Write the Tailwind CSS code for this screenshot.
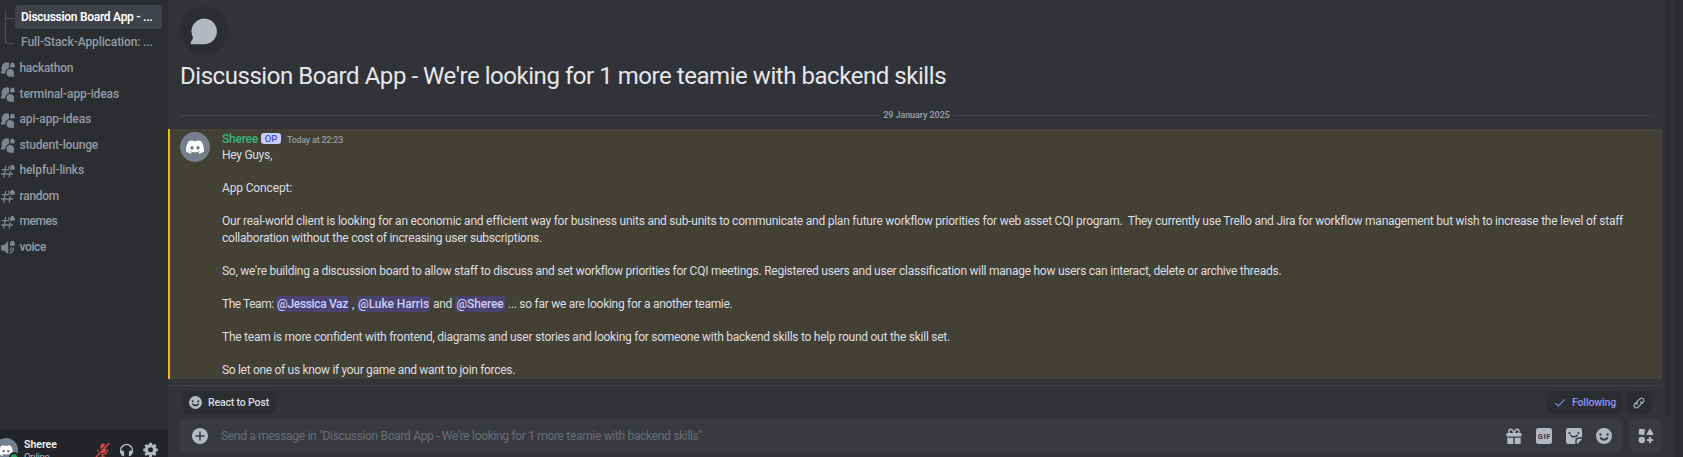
<!DOCTYPE html>
<html lang="en">
<head>
<meta charset="utf-8">
<title>Discussion Board App</title>
<script src="https://cdn.jsdelivr.net/npm/@tailwindcss/browser@4"></script>
</head>
<body class="h-[457px] w-[1683px] overflow-hidden bg-[#313338] font-['Roboto','Liberation_Sans',sans-serif] text-[12px] text-[#dbdee1]">
<svg class="hidden">
  <symbol id="clyde" viewBox="0 0 127.14 96.36"><path fill="currentColor" d="M107.7,8.07A105.15,105.15,0,0,0,81.47,0a72.06,72.06,0,0,0-3.36,6.83A97.68,97.68,0,0,0,49,6.83,72.37,72.37,0,0,0,45.64,0,105.89,105.89,0,0,0,19.39,8.09C2.79,32.65-1.71,56.6.54,80.21h0A105.73,105.73,0,0,0,32.71,96.36,77.7,77.7,0,0,0,39.6,85.25a68.42,68.42,0,0,1-10.85-5.18c.91-.66,1.8-1.34,2.66-2a75.57,75.57,0,0,0,64.32,0c.87.71,1.76,1.39,2.66,2a68.68,68.68,0,0,1-10.87,5.19,77,77,0,0,0,6.89,11.1A105.25,105.25,0,0,0,126.6,80.22h0C129.24,52.84,122.09,29.11,107.7,8.07ZM42.45,65.69C36.18,65.69,31,60,31,53s5-12.74,11.43-12.74S54,46,53.89,53,48.84,65.69,42.45,65.69Zm42.24,0C78.41,65.69,73.25,60,73.25,53s5-12.74,11.44-12.74S96.23,46,96.12,53,91.08,65.69,84.69,65.69Z"/></symbol>
  <symbol id="lock" viewBox="0 0 5 5"><path fill="currentColor" d="M.6 1.900V1.600a1.900 1.600 0 0 1 3.800 0v.3q.6.1.6.6v1.700q0 .8-.8.8H.8Q0 5 0 4.200V2.500q0-.5.6-.6Z"/></symbol>
  <symbol id="forum" viewBox="0 0 15 15"><path fill="currentColor" d="M8.300.4A5.600 5.600 0 0 0 1.800 7.500c.2.500.1 1-.2 1.400L.8 10.400c-.3.500 0 1 .5 1h3.400c.3 0 .5-.2.5-.5A5.500 5.500 0 0 1 8.500 6.200c.3-.1.5-.2.500-.5V.9c0-.3-.3-.5-.7-.5Z"/><path fill="currentColor" d="M10.300 7.100a3.800 3.800 0 1 0 0 7.600h3.600c.4 0 .6-.4.4-.7l-.5-.8c-.2-.2-.1-.5 0-.8a3.800 3.800 0 0 0-3.500-5.300Z"/><use href="#lock" x="9.900" y=".3" width="5" height="5.400"/></symbol>
  <symbol id="hash" viewBox="0 0 15 15"><path fill="none" stroke="currentColor" stroke-width="1.300" stroke-linecap="round" d="M5.600 2.500 3.800 13.200M10.200 7.500 9.200 13.200M8.900 2.500 8.700 4M2.200 5.700H8.800M1.500 10H12.500"/><use href="#lock" x="9.900" y=".6" width="5" height="5.400"/></symbol>
  <symbol id="voice" viewBox="0 0 15 15"><path fill="currentColor" d="M7.300 1.800c.4-.3.900 0 .9.500v10.800c0 .5-.5.8-.9.500L4 10.500H2a1 1 0 0 1-1-1V6a1 1 0 0 1 1-1h2Z"/><path fill="none" stroke="currentColor" stroke-width="1.300" stroke-linecap="round" d="M9.900 13.100a5.500 5.500 0 0 0 3.600-5M9.900 10.200a2.900 2.900 0 0 0 1.500-2.400"/><use href="#lock" x="9.900" y=".6" width="5" height="5.400"/></symbol>
  <symbol id="smile" viewBox="0 0 24 24"><path fill="currentColor" fill-rule="evenodd" d="M12 0a12 12 0 1 0 0 24 12 12 0 0 0 0-24ZM6.700 8a1.800 1.800 0 1 1 0 3.600 1.800 1.800 0 0 1 0-3.600Zm10.600 0a1.800 1.800 0 1 1 0 3.600 1.800 1.800 0 0 1 0-3.600ZM6 13.800q.9-.9 1.900.2 1.600 2.100 4.100 2.100t4.100-2.100q1-1.100 1.900-.2.800.7.200 1.800-2.100 3.400-6.200 3.400t-6.200-3.400q-.6-1.100.2-1.800Z"/></symbol>
</svg>
<div class="flex h-full w-full">
  <!-- Channel list -->
  <aside class="flex w-[168px] shrink-0 flex-col overflow-hidden bg-[#2b2d31] font-medium text-[#949ba4]">
    <div class="flex h-[55.500px] pt-[5px]">
      <svg class="h-[45px] w-[15px] shrink-0" viewBox="0 5 15 45" fill="none" stroke="#4e5058" stroke-width="1.200"><path d="M5.500 11V40.500q0 3 3 3H14M5.500 18.500H14"/></svg>
      <div class="w-[147px]">
        <div class="h-6 rounded-[3px] bg-[#404249] pl-[6px] leading-[25px] font-semibold tracking-[-0.279px] whitespace-nowrap text-white">Discussion Board App - ...</div>
        <div class="mt-[1px] h-6 pl-[6px] leading-[25px] tracking-[-0.095px] whitespace-nowrap">Full-Stack-Application: ...</div>
      </div>
    </div>
    <nav class="flex flex-col [&_svg]:size-[15px] [&_svg]:translate-y-[1px] [&_svg]:text-[#80848e] [&>div]:flex [&>div]:h-[25.500px] [&>div]:items-center [&>div]:gap-[4.500px]">
      <div><svg><use href="#forum"/></svg><span class="tracking-[-0.309px]">hackathon</span></div>
      <div><svg><use href="#forum"/></svg><span class="tracking-[-0.105px]">terminal-app-ideas</span></div>
      <div><svg><use href="#forum"/></svg><span class="tracking-[-0.137px]">api-app-ideas</span></div>
      <div><svg><use href="#forum"/></svg><span class="tracking-[-0.196px]">student-lounge</span></div>
      <div><svg><use href="#hash"/></svg><span class="tracking-[-0.129px]">helpful-links</span></div>
      <div><svg><use href="#hash"/></svg><span class="tracking-[-0.300px]">random</span></div>
      <div><svg><use href="#hash"/></svg><span class="tracking-[-0.450px]">memes</span></div>
      <div><svg><use href="#voice"/></svg><span class="tracking-[-0.385px]">voice</span></div>
    </nav>
    <div class="mt-auto flex h-[27px] items-start bg-[#232428] pt-2">
      <div class="relative -ml-[6px] flex size-6 shrink-0 items-center justify-center rounded-full bg-[#747f8d] text-white">
        <svg class="h-[11px] w-[14px]"><use href="#clyde"/></svg>
        <span class="absolute top-[14px] left-[15px] size-[10px] rounded-full border-2 border-[#232428] bg-[#23a55a]"></span>
      </div>
      <div class="ml-[6px] w-[71px] text-[10.500px] leading-[13px]">
        <div class="font-semibold text-[#f2f3f5]">Sheree</div>
        <div class="text-[9.750px] leading-[11px] font-normal tracking-[-0.350px] text-[#b5bac1]">Online</div>
      </div>
      <div class="flex gap-[9px] pt-1 text-[#b5bac1]">
        <svg class="size-[15px] text-[#da4a45]" viewBox="0 0 15 15" fill="none" stroke="currentColor"><path d="M1.500 14.500 14 1.500" stroke-width="1.500" stroke-linecap="round"/><path d="M5.500 8V4a2.500 2.500 0 0 1 4.800-1Z" fill="currentColor" stroke="none"/><path d="M10.500 7.200v.8a2.500 2.500 0 0 1-2.500 2.500l-.8-.1ZM2.800 7.500q.1 1.200.6 2.200M12.700 7.500A4.800 4.800 0 0 1 5.900 12.200M7.800 12.500V15M5.500 15H10" stroke-width="1.200"/></svg>
        <svg class="size-[15px]" viewBox="0 0 15 15"><path d="M2.800 12A5.900 5.900 0 1 1 12.200 12" fill="none" stroke="currentColor" stroke-width="1.500"/><path fill="currentColor" d="M1.300 8.500h1.800a2 2 0 0 1 2 2v3.700C3 14.500 1 12 1.300 8.500ZM13.700 8.500h-1.800a2 2 0 0 0-2 2v3.700c2.100.3 4.100-2.200 3.800-5.700Z"/></svg>
        <svg class="size-[15px]" viewBox="0 0 24 24"><path fill="currentColor" fill-rule="evenodd" d="M10 1h4l.6 3 1.700.7L18.900 3l2.800 2.800-1.700 2.600.6 1.600 3 .6v4l-3 .6-.7 1.600 1.700 2.600-2.800 2.800-2.600-1.700-1.600.7-.6 3h-4l-.6-3-1.700-.7-2.500 1.700L2.400 19.400l1.700-2.600-.7-1.600-3-.6v-4l3-.6.7-1.600-1.700-2.600L5.200 3l2.600 1.700L9.400 4ZM12 8.500a4 4 0 1 0 0 8 4 4 0 0 0 0-8Z"/></svg>
      </div>
    </div>
  </aside>

  <!-- Thread -->
  <main class="flex w-[1497px] shrink-0 flex-col">
    <div class="mt-[7px] ml-3 flex size-12 items-center justify-center rounded-full bg-[#2b2d31]">
      <svg class="size-[27px] -translate-x-px text-[#b5b8c1]" viewBox="0 0 27 27"><path fill="currentColor" d="M14 .5A12.700 12.700 0 0 0 2.700 18.700c.4.800.3 1.500-.2 2.200L.8 24.200c-.6 1 0 2.100 1.100 2.100H14A12.900 12.900 0 0 0 14 .5Z"/></svg>
    </div>
    <h1 class="mt-[6px] ml-3 h-[30px] text-[24px] leading-[30px] font-normal tracking-[-0.453px] whitespace-nowrap text-[#e6e7ea]">Discussion Board App - We're looking for 1 more teamie with backend skills</h1>
    <div class="mt-[18px] mr-3 ml-3 flex h-3 items-center gap-[3px] text-[9px] leading-3 font-semibold tracking-[-0.090px] text-[#949ba4]">
      <span class="h-px flex-1 bg-[#3f4147]"></span>29 January 2025<span class="h-px flex-1 bg-[#3f4147]"></span>
    </div>
    <article class="mt-2 flex h-[250px] w-[1494px] border-l-2 border-[#f0b82c] bg-[#434035] pl-[10px]">
      <div class="mt-[3px] flex size-[30px] shrink-0 items-center justify-center rounded-full bg-[#757e8a] text-white"><svg class="h-[14px] w-[18px]"><use href="#clyde"/></svg></div>
      <div class="ml-3 pt-[1.500px] leading-[16.500px] whitespace-nowrap">
        <div class="flex h-[16.500px] items-center"><span class="font-medium tracking-[-0.225px] text-[#3ab27f]">Sheree</span><span class="ml-[3px] flex h-[11px] w-5 items-center justify-center rounded-[3px] bg-[#c9cdfb] text-[9.500px] leading-[11px] font-medium text-[#4752c4]">OP</span><span class="mt-[2px] ml-[6px] text-[9px] font-medium tracking-[-0.243px] text-[#949ba4]">Today at 22:23</span></div>
        <p class="tracking-[-0.280px]">Hey Guys,</p>
        <p class="mt-[16.500px] tracking-[-0.148px]">App Concept:</p>
        <p class="mt-[16.500px] tracking-[-0.232px]">Our real-world client is looking for an economic and efficient way for business units and sub-units to communicate and plan future workflow priorities for web asset CQI program.&nbsp; They currently use Trello and Jira for workflow management but wish to increase the level of staff</p>
        <p class="tracking-[-0.241px]">collaboration without the cost of increasing user subscriptions.</p>
        <p class="mt-[16.500px] tracking-[-0.253px]">So, we're building a discussion board to allow staff to discuss and set workflow priorities for CQI meetings. Registered users and user classification will manage how users can interact, delete or archive threads.</p>
        <div class="mt-[16.500px] flex h-[16.500px] [&>b]:h-4 [&>b]:rounded-[2px] [&>b]:bg-[#4a4370] [&>b]:text-center [&>b]:font-medium [&>b]:text-[#c9cdfb]"><span class="w-[54px] tracking-[-0.450px]">The Team:</span><b class="w-[73px] tracking-[-0.350px]">@Jessica Vaz</b><span class="w-2 pl-[3px]">,</span><b class="w-[73px] tracking-[-0.081px]">@Luke Harris</b><span class="w-[25px] pl-[3px] tracking-[-0.300px]">and</span><b class="w-[50px] tracking-[-0.159px]">@Sheree</b><span class="pl-[3px] tracking-[-0.280px]">... so far we are looking for a another teamie.</span></div>
        <p class="mt-[16.500px] tracking-[-0.248px]">The team is more confident with frontend, diagrams and user stories and looking for someone with backend skills to help round out the skill set.</p>
        <p class="mt-[16.500px] tracking-[-0.311px]">So let one of us know if your game and want to join forces.</p>
      </div>
    </article>
    <div class="mt-[6px] flex w-[1494px] items-start border-t border-[#3f4147] pt-[5px] pr-[10px] pl-[14px] text-[10.500px] font-medium">
      <div class="flex h-[23px] w-[94px] items-center gap-[6px] rounded-[6px] bg-[#2b2d31] pl-[7px] tracking-[-0.147px] text-[#dbdee1]"><svg class="size-[13px] text-[#b5bac1]"><use href="#smile"/></svg>React to Post</div>
      <div class="ml-auto flex h-[23px] w-[76px] items-center gap-[7px] rounded-[6px] bg-[#2b2d31] pl-2 tracking-[-0.134px] text-[#8f93f2]"><svg class="h-[8px] w-[10px]" viewBox="0 0 10 8" fill="none" stroke="#7a80dd" stroke-width="1.200" stroke-linecap="round"><path d="M.6 4.300 3.400 7 9.400.8"/></svg>Following</div>
      <div class="ml-[3px] flex h-[23px] w-[26px] items-center justify-center rounded-[6px] bg-[#2b2d31] text-[#b5bac1]"><svg class="size-[12px]" viewBox="0 0 12 12" fill="none" stroke="currentColor" stroke-width="1.100" stroke-linecap="round"><path d="M4.300 7.400C3.500 6.200 3.800 5 4.600 4.200L7 1.800a2.250 2.250 0 0 1 3.200 3.200L8.700 6.500M7.700 4.600c.8 1.200.5 2.400-.3 3.200L5 10.200A2.250 2.250 0 0 1 1.800 7L3.300 5.500"/></svg></div>
    </div>
    <div class="mt-[5px] ml-3 flex h-[33px] w-[1482px] gap-[6px] text-[#b5b8c1]">
      <div class="flex flex-1 items-center rounded-[6px] bg-[#383a40] pr-[11px] pl-3">
        <svg class="size-4" viewBox="0 0 16 16"><circle cx="8" cy="8" r="8" fill="currentColor"/><path d="M8 4v8M4 8h8" stroke="#383a40" stroke-width="1.500" stroke-linecap="round"/></svg>
        <span class="ml-[13px] tracking-[-0.322px] whitespace-nowrap text-[#6a6d75]">Send a message in "Discussion Board App - We're looking for 1 more teamie with backend skills"</span>
        <div class="ml-auto flex items-center gap-[14px] [&>svg]:size-4">
          <svg viewBox="0 0 16 16"><g fill="currentColor"><path d="M.5 5h15v3.500H.5ZM1.300 9.700H7.300V16H2.300a1 1 0 0 1-1-1ZM8.700 9.700h6V15a1 1 0 0 1-1 1h-5Z"/></g><path d="M8 5.500C7 2 5.500 1 4.300 1.200S2.500 3.500 3.500 5M8 5.500C9 2 10.500 1 11.700 1.200S13.500 3.500 12.500 5" fill="none" stroke="currentColor" stroke-width="1.500"/></svg>
          <svg viewBox="0 0 16 16"><rect width="16" height="16" rx="2.300" fill="currentColor"/><text x="8" y="10.800" text-anchor="middle" textLength="12.500" class="fill-[#383a40] text-[7.500px] font-bold">GIF</text></svg>
          <svg viewBox="0 0 16 16"><path fill="currentColor" d="M2.300 0H13.700A2.300 2.300 0 0 1 16 2.300V9.300H13A3.700 3.700 0 0 0 9.300 13V16H2.300A2.300 2.300 0 0 1 0 13.700V2.300A2.300 2.300 0 0 1 2.300 0ZM10.700 16V13A2.300 2.300 0 0 1 13 10.700H16Q15.800 11.500 15 12.300L12.300 15Q11.500 15.800 10.700 16Z"/><circle cx="3.500" cy="5" r="1.100" fill="#383a40"/><circle cx="12.500" cy="5" r="1.100" fill="#383a40"/><path d="M4.700 7.200Q8 10.500 11.300 7.200" fill="none" stroke="#383a40" stroke-width="1.500" stroke-linecap="round"/></svg>
          <svg><use href="#smile"/></svg>
        </div>
      </div>
      <div class="flex w-[33px] items-center justify-center rounded-[6px] bg-[#383a40]"><svg class="size-[16px]" viewBox="0 0 16 16" fill="currentColor"><path d="M2 .8 6.200 1.300q.8.100.7.900L6.400 6.500q-.1.700-.9.600L1.300 6.600Q.5 6.500.6 5.700L1.100 1.500Q1.200.7 2 .8ZM11.300 1.200q.7-.9 1.400 0L15.300 5.700q.4 1.200-.8 1.300H9.500Q8.300 6.900 8.700 5.700Z"/><path d="M12 9.800v4.400M9.800 12h4.400" stroke="currentColor" stroke-width="2.200" stroke-linecap="round"/><circle cx="3.800" cy="12" r="3.200"/></svg></div>
    </div>
  </main>

  <div class="h-[416px] w-[6px] shrink-0 rounded-b-[3px] bg-[#2b2d31]"></div>
  <div class="ml-[3px] flex-1 bg-[#2b2d31]"></div>
</div>
</body>
</html>
